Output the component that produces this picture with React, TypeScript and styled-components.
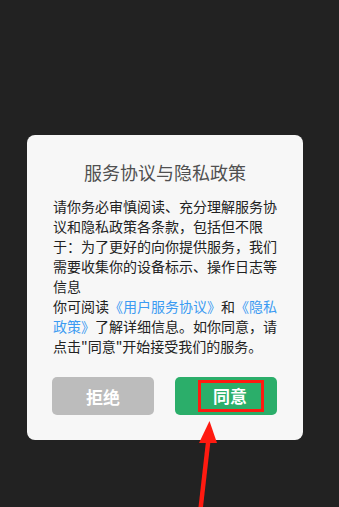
import React from 'react'
import styled, { createGlobalStyle } from 'styled-components'

const GlobalStyle = createGlobalStyle`
  html, body {
    margin: 0;
    padding: 0;
    background: #222222;
  }
  body {
    font-family: "Noto Sans CJK SC", "Noto Sans", sans-serif;
  }
`

const Screen = styled.div`
  position: relative;
  width: 339px;
  height: 507px;
  overflow: hidden;
  background: #222222;
  padding-top: 135px;
  box-sizing: border-box;
`

const Dialog = styled.div`
  width: 276px;
  margin-left: 27px;
  box-sizing: border-box;
  background: #f7f7f7;
  border-radius: 8px;
  padding: 20px 26px 25px 26px;
`

const Title = styled.div`
  font-size: 18px;
  line-height: 34px;
  color: #505050;
  text-align: center;
  margin-bottom: 7px;
`

const Body = styled.div`
  font-size: 14px;
  line-height: 20px;
  color: #222222;
  width: 224px;
`

const Para = styled.p`
  margin: 0;
`

const Link = styled.span`
  color: #3b9bf2;
`

const Buttons = styled.div`
  display: flex;
  gap: 21px;
  margin-top: 21px;
  margin-left: -1px;
`

const Button = styled.div<{ $tone: 'gray' | 'green' }>`
  width: 103px;
  height: 38px;
  border-radius: 5px;
  background: ${({ $tone }) => ($tone === 'green' ? '#2bae6a' : '#bcbcbc')};
  color: #ffffff;
  font-size: 17px;
  font-weight: bold;
  display: flex;
  align-items: center;
  justify-content: center;
`

const Highlight = styled.span`
  display: inline-block;
  border: 3px solid #ff1a10;
  padding: 0 14px 0 12px;
  line-height: 26px;
  margin-left: 10px;
`

const Arrow = styled.svg`
  position: absolute;
  left: 0;
  top: 0;
`

export default function App() {
  return (
    <>
      <GlobalStyle />
      <Screen>
        <Dialog>
          <Title>服务协议与隐私政策</Title>
          <Body>
            <Para>
              请你务必审慎阅读、充分理解服务协议和隐私政策各条款，包括但不限于：为了更好的向你提供服务，我们需要收集你的设备标示、操作日志等信息
            </Para>
            <Para>
              你可阅读<Link>《用户服务协议》</Link>和<Link>《隐私政策》</Link>了解详细信息。如你同意，请点击"同意"开始接受我们的服务。
            </Para>
          </Body>
          <Buttons>
            <Button $tone="gray">拒绝</Button>
            <Button $tone="green">
              <Highlight>同意</Highlight>
            </Button>
          </Buttons>
        </Dialog>
        <Arrow width="339" height="507" viewBox="0 0 339 507">
          <polygon points="209.5,421 199,443 217,443" fill="#ff1a10" />
          <polygon points="206,441 210.5,441 203,507 198.5,507" fill="#ff1a10" />
        </Arrow>
      </Screen>
    </>
  )
}
